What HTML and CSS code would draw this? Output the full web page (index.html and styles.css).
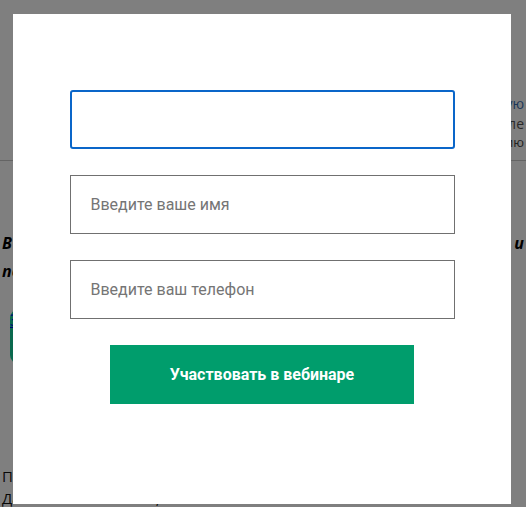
FILE: index.html
```html
<!DOCTYPE html>
<html lang="ru">
<head>
    <meta charset="UTF-8">
    <meta name="viewport" content="width=device-width, initial-scale=1.0">
    <title>Вебинар</title>
    <link rel="stylesheet" href="styles.css">
</head>
<body>
    <div class="page">
        <header class="top">
            <div class="top-info">
                <a href="#" class="top-link">Ближайший вебинар сегодня, смотрите следующую</a>
                <p>Узнайте подробнее о вебинаре и его программе на неделе</p>
                <p class="small">Оставьте заявку и получите Инструкцию</p>
            </div>
        </header>

        <section class="intro">
            <h2>В этом вебинаре вы узнаете, как выстроить продажи и получать прибыль от своей работы</h2>
            <a href="#" class="cta">Записаться</a>
            <p class="text">Простые шаги, которые помогут вам начать</p>
            <p class="text">Даже если нет опыта, всё можно освоить вместе с нами</p>
        </section>
    </div>

    <div class="overlay">
        <form class="modal" id="webinarForm">
            <input type="text" class="field field-focus" autofocus>
            <input type="text" class="field" placeholder="Введите ваше имя">
            <input type="tel" class="field" placeholder="Введите ваш телефон">
            <button type="submit" class="send">Участвовать в вебинаре</button>
        </form>
    </div>
</body>
</html>
```

FILE: styles.css
```css
* {
    box-sizing: border-box;
}
body {
    margin: 0;
    font-family: "Open Sans", Arial, sans-serif;
    background: #fff;
    color: #000;
}
.page {
    overflow: hidden;
    height: 507px;
}
.top {
    height: 161px;
    border-bottom: 1px solid #c8c8c8;
    padding: 94px 2px 0 0;
}
.top-info {
    font-size: 14px;
    text-align: right;
}
.top-link {
    color: #3a6fb0;
    text-decoration: none;
    display: block;
    line-height: 20px;
}
.top-info p {
    margin: 0;
    color: #555;
    line-height: 20px;
}
.top-info .small {
    font-size: 13px;
    color: #444;
    line-height: 16px;
}
.intro {
    padding: 68px 0 0 0;
}
.intro h2 {
    margin: 0 2px;
    font-size: 16px;
    font-style: italic;
    font-weight: bold;
    line-height: 28px;
    text-align: justify;
}
.cta {
    display: block;
    width: 220px;
    height: 55px;
    margin: 24px 0 0 10px;
    background: #14d29c;
    border-radius: 9px;
}
.text {
    margin: 0 2px;
    font-size: 15px;
    color: #111;
}
.intro .text:first-of-type {
    margin-top: 100px;
    line-height: 24px;
}
.intro .text + .text {
    line-height: 20px;
}
.overlay {
    position: fixed;
    inset: 0;
    background: rgba(0, 0, 0, 0.5);
}
.modal {
    margin: 14px 0 0 13px;
    width: 498px;
    height: 490px;
    background: #fff;
    padding: 76px 57px 0;
    display: flex;
    flex-direction: column;
    align-items: center;
    font-family: Roboto, Arial, sans-serif;
}
.field {
    width: 385px;
    height: 59px;
    border: 1px solid #707070;
    border-radius: 0;
    padding: 0 20px;
    font-family: Roboto, Arial, sans-serif;
    font-size: 16px;
    color: #333;
    margin-bottom: 26px;
    outline: none;
}
.field::placeholder {
    color: #757575;
}
.field-focus {
    border: 2px solid #0a66c9;
    border-radius: 3px;
}
.send {
    width: 304px;
    height: 59px;
    border: none;
    background: #009d6c;
    color: #fff;
    font-family: Roboto, Arial, sans-serif;
    font-weight: bold;
    font-size: 16px;
    cursor: pointer;
}
```
